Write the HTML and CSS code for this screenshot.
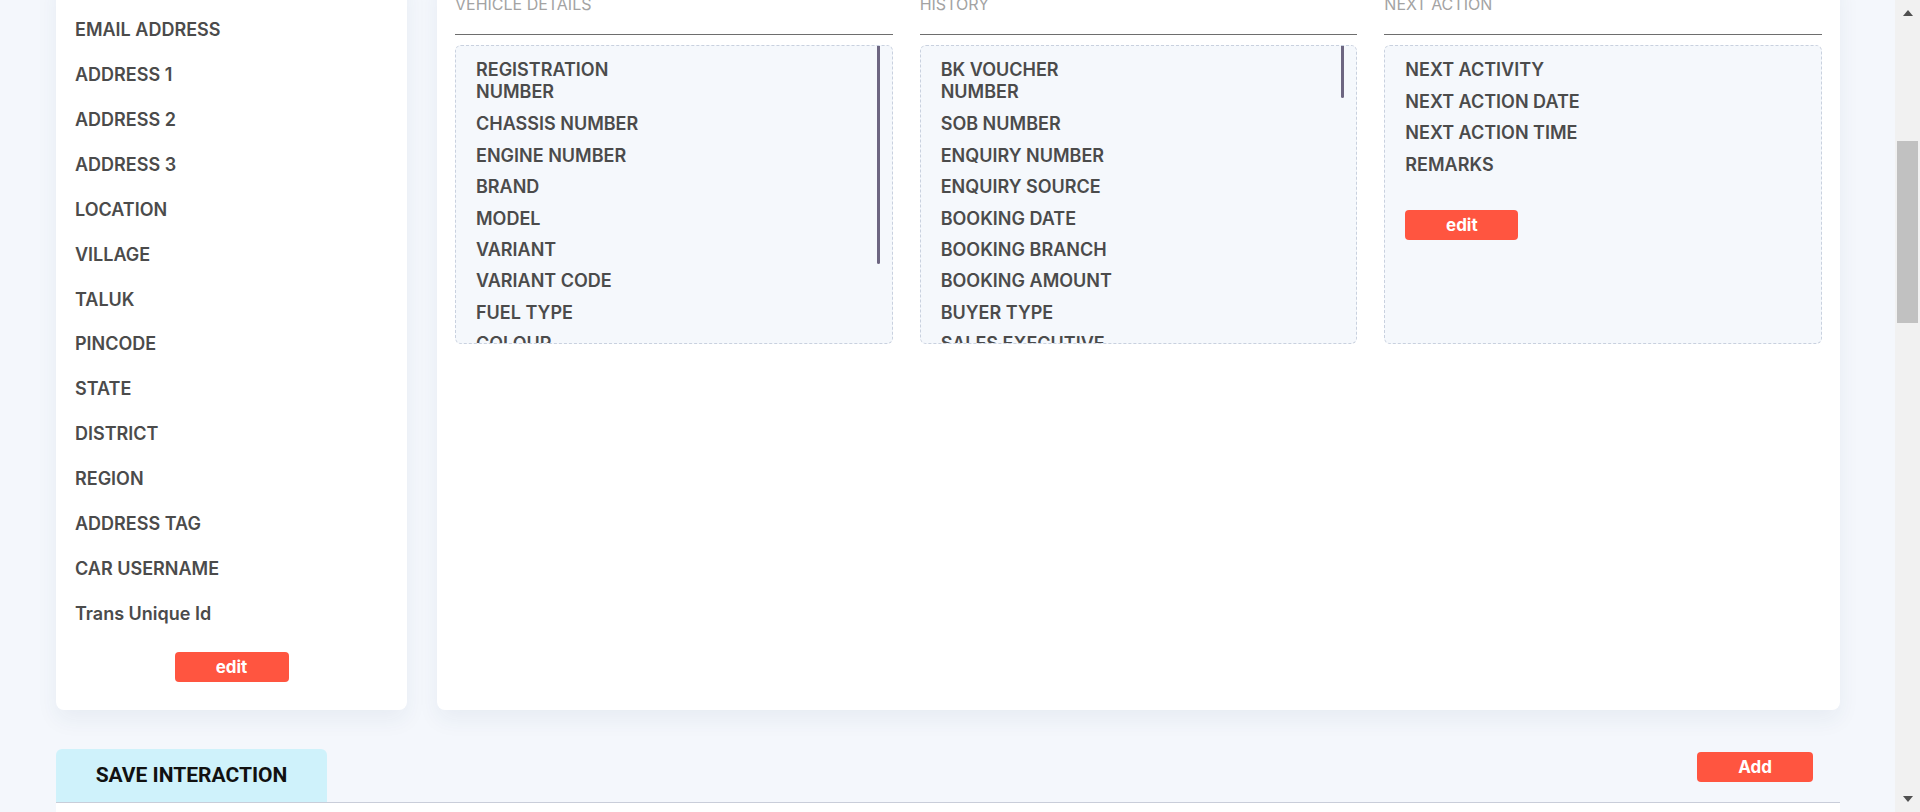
FILE: index.html
```html
<!DOCTYPE html>
<html lang="en">
<head>
<meta charset="utf-8">
<title>Interaction</title>
<link rel="stylesheet" href="styles.css">
</head>
<body>
<div class="viewport">
  <div class="page">
    <div class="cards">
      <div class="card card-left">
        <ul class="field-list">
          <li>EMAIL ADDRESS</li>
          <li>ADDRESS 1</li>
          <li>ADDRESS 2</li>
          <li>ADDRESS 3</li>
          <li>LOCATION</li>
          <li>VILLAGE</li>
          <li>TALUK</li>
          <li>PINCODE</li>
          <li>STATE</li>
          <li>DISTRICT</li>
          <li>REGION</li>
          <li>ADDRESS TAG</li>
          <li>CAR USERNAME</li>
          <li>Trans Unique Id</li>
        </ul>
        <div class="btn-row"><button class="btn">edit</button></div>
      </div>
      <div class="card card-main">
        <section class="col">
          <h3 class="col-title">VEHICLE DETAILS</h3>
          <div class="box">
            <ul class="box-list">
              <li class="two-line">REGISTRATION NUMBER</li>
              <li>CHASSIS NUMBER</li>
              <li>ENGINE NUMBER</li>
              <li>BRAND</li>
              <li>MODEL</li>
              <li>VARIANT</li>
              <li>VARIANT CODE</li>
              <li>FUEL TYPE</li>
              <li>COLOUR</li>
              <li>YEAR OF MANUFACTURE</li>
            </ul>
            <div class="thumb thumb-vehicle"></div>
          </div>
        </section>
        <section class="col">
          <h3 class="col-title">HISTORY</h3>
          <div class="box">
            <ul class="box-list">
              <li class="two-line">BK VOUCHER NUMBER</li>
              <li>SOB NUMBER</li>
              <li>ENQUIRY NUMBER</li>
              <li>ENQUIRY SOURCE</li>
              <li>BOOKING DATE</li>
              <li>BOOKING BRANCH</li>
              <li>BOOKING AMOUNT</li>
              <li>BUYER TYPE</li>
              <li>SALES EXECUTIVE</li>
              <li>TEAM LEADER</li>
            </ul>
            <div class="thumb thumb-history"></div>
          </div>
        </section>
        <section class="col">
          <h3 class="col-title">NEXT ACTION</h3>
          <div class="box">
            <ul class="box-list">
              <li>NEXT ACTIVITY</li>
              <li>NEXT ACTION DATE</li>
              <li>NEXT ACTION TIME</li>
              <li>REMARKS</li>
            </ul>
            <button class="btn btn-next">edit</button>
          </div>
        </section>
      </div>
    </div>
    <div class="tab-row">
      <div class="tab">SAVE INTERACTION</div>
      <button class="btn btn-add">Add</button>
    </div>
    <div class="panel"></div>
  </div>
  <div class="scrollbar">
    <span class="arrow arrow-up"></span>
    <span class="sb-thumb"></span>
    <span class="arrow arrow-down"></span>
  </div>
</div>
</body>
</html>
```

FILE: styles.css
```css
* { box-sizing: border-box; }
html, body {
  margin: 0;
  padding: 0;
  height: 812px;
  overflow: hidden;
  background: #f4f7fc;
  font-family: "Inter", "Noto Sans", sans-serif;
}
.viewport {
  display: flex;
  width: 1920px;
  height: 812px;
  overflow: hidden;
}
.page {
  width: 1895px;
  flex: 0 0 1895px;
  padding: 0 55px 0 56px;
  margin-top: -24px;
}
.cards {
  display: flex;
  gap: 30px;
  align-items: stretch;
}
.card {
  background: #ffffff;
  border-radius: 8px;
  box-shadow: 0 10px 22px rgba(40, 60, 110, 0.06);
}
.card-left {
  width: 351px;
  flex: 0 0 351px;
  padding: 31px 19px 28px 19px;
}
.field-list {
  list-style: none;
  margin: 0;
  padding: 0;
}
.field-list li {
  font-size: 18px;
  font-weight: 600;
  line-height: 21.6px;
  padding: 11.7px 0;
  color: #4b4b4b;
}
.btn-row {
  display: flex;
  justify-content: center;
  margin-top: 15px;
}
.btn {
  font-family: "Inter", "Noto Sans", sans-serif;
  background: #ff5540;
  color: #ffffff;
  font-weight: 700;
  font-size: 17px;
  border: 0;
  border-radius: 4px;
  width: 114px;
  height: 30px;
  padding: 0;
  line-height: 30px;
}
.card-main {
  flex: 1 1 auto;
  display: flex;
  gap: 27px;
  padding: 18px 18px 0 18px;
  align-items: flex-start;
}
.col {
  flex: 1 1 0;
  min-width: 0;
}
.col-title {
  margin: 0;
  font-size: 16px;
  font-weight: 400;
  line-height: 20px;
  color: #a3a3a3;
  padding-bottom: 20px;
  border-bottom: 1px solid #6e6e6e;
}
.box {
  position: relative;
  margin-top: 10px;
  height: 299px;
  border: 1px dashed #c9d1df;
  border-radius: 6px;
  background: #f5f8fc;
  padding: 13.4px 20px 0 20px;
  overflow: hidden;
}
.box-list {
  list-style: none;
  margin: 0;
  padding: 0;
}
.box-list li {
  font-size: 18px;
  font-weight: 600;
  line-height: 21.6px;
  margin-bottom: 9.8px;
  color: #4b4b4b;
  max-width: 185px;
}
.box-list li.two-line {
  margin-bottom: 10.8px;
}
.thumb {
  position: absolute;
  top: -1px;
  right: 12px;
  width: 3px;
  border-radius: 2px;
  background: #6d6681;
}
.thumb-vehicle { height: 219px; }
.thumb-history { height: 53px; }
.btn-next {
  margin-top: 25px;
  width: 113px;
  height: 30px;
}
.tab-row {
  margin-top: 39px;
  display: flex;
  justify-content: space-between;
  align-items: flex-start;
  border-bottom: 1px solid #c9cdd9;
}
.tab {
  width: 271px;
  height: 53px;
  background: #cff2fb;
  border-radius: 6px 6px 0 0;
  display: flex;
  align-items: center;
  justify-content: center;
  font-family: "Roboto", "Liberation Sans", sans-serif;
  font-weight: 700;
  font-size: 21px;
  color: #111111;
}
.btn-add {
  margin-top: 3px;
  margin-right: 27px;
  width: 116px;
}
.panel {
  height: 200px;
  background: #ffffff;
}
.scrollbar {
  width: 25px;
  flex: 0 0 25px;
  height: 812px;
  background: #f1f1f1;
  display: flex;
  flex-direction: column;
  align-items: center;
}
.arrow {
  width: 0;
  height: 0;
  border-left: 5.5px solid transparent;
  border-right: 5.5px solid transparent;
}
.arrow-up {
  margin-top: 10px;
  border-bottom: 6px solid #505050;
}
.arrow-down {
  margin-top: auto;
  margin-bottom: 10px;
  border-top: 6px solid #505050;
}
.sb-thumb {
  margin-top: 125px;
  width: 21px;
  height: 182px;
  background: #c1c1c1;
}
```
